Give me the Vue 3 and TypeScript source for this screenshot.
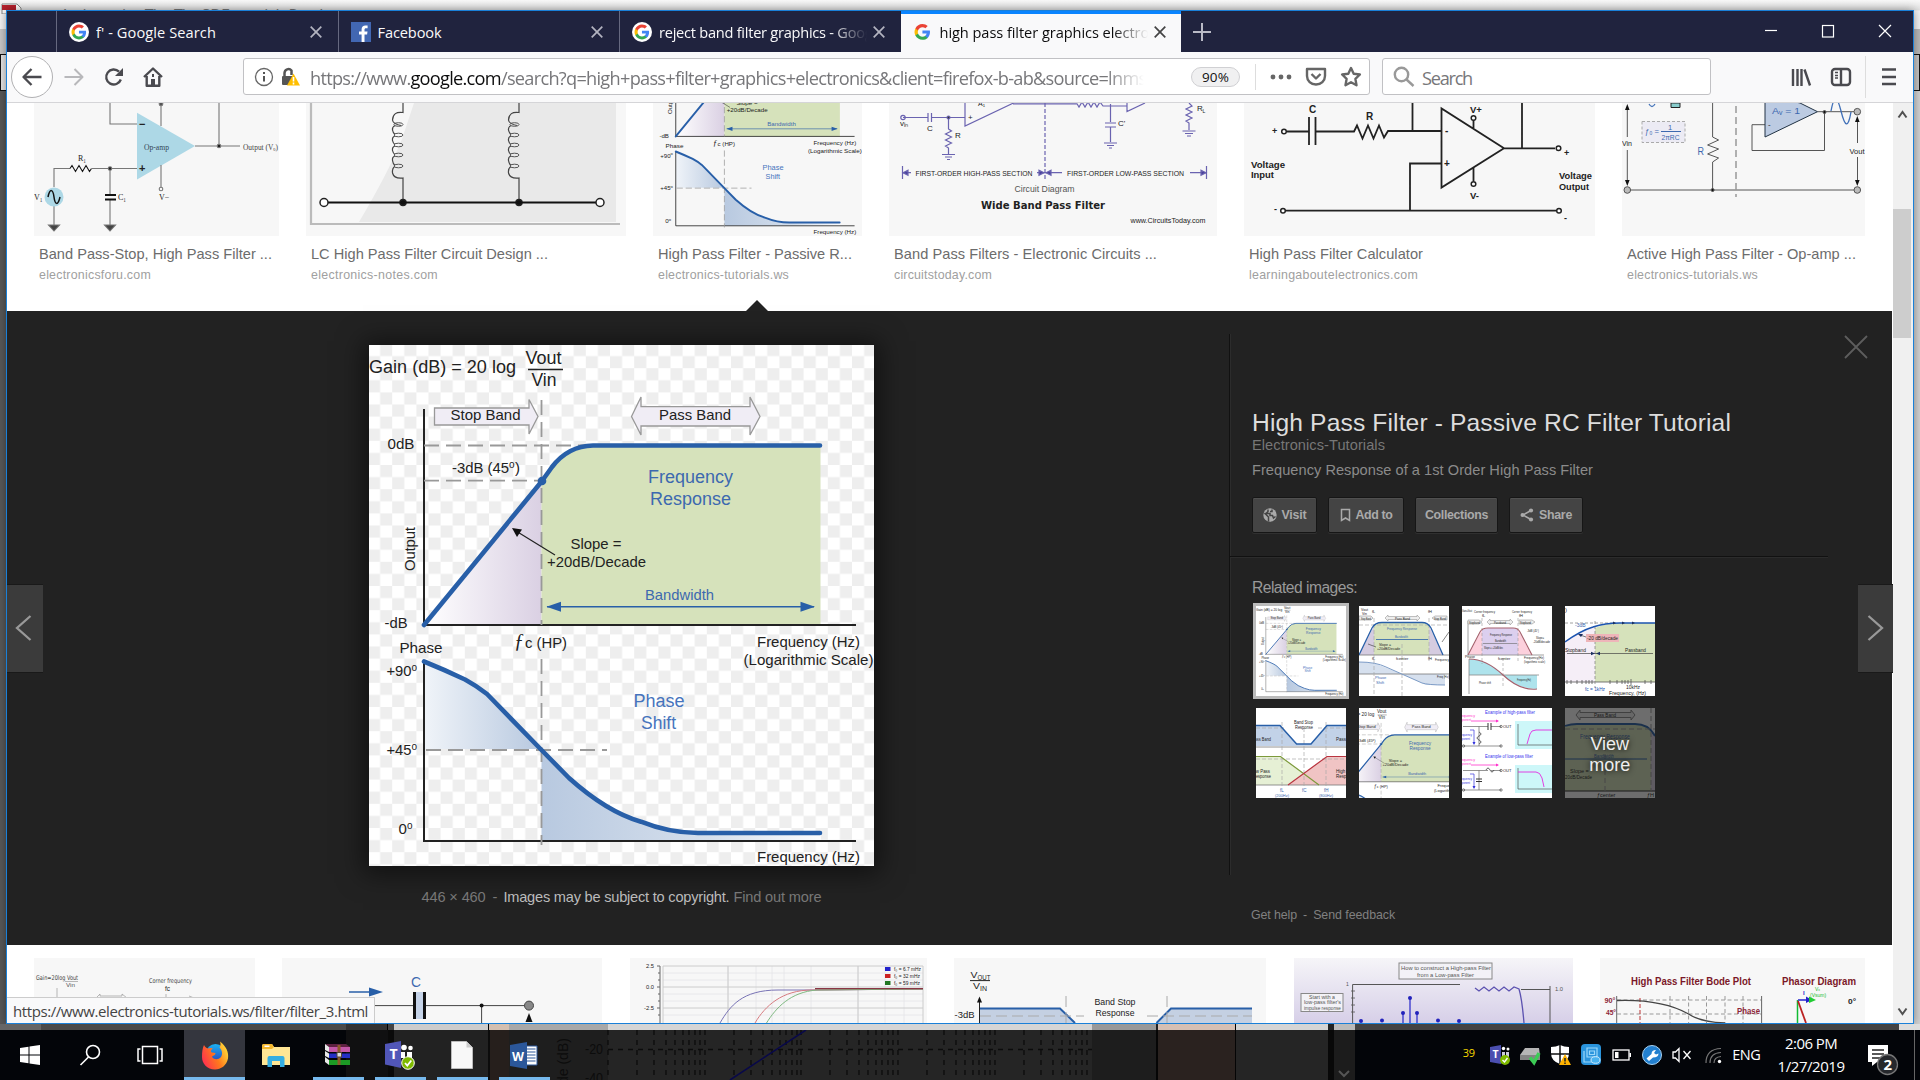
<script setup lang="ts">
import { h } from 'vue'
import type { FunctionalComponent, ObjectDirective } from 'vue'

/* Spreads a label's letters so that it takes the given width in pixels. */
const vFit: ObjectDirective<HTMLElement, number> = {
  mounted(el, { value }) {
    const count = (el.textContent ?? '').length
    const width = el.getBoundingClientRect().width
    el.style.letterSpacing = `${(value - width) / count}px`
  },
}

interface LabelProps { x: number; y: number; s: number; l?: number; c?: string; b?: boolean; f?: string }

/* Text inside a drawing: position, size, run length, colour. */
const Tx: FunctionalComponent<LabelProps> = (p, { slots }) =>
  h('text', {
    x: p.x, y: p.y, 'font-size': p.s, fill: p.c ?? '#222', stroke: 'none',
    'font-weight': p.b ? 700 : 400, 'font-family': p.f ?? 'Liberation Sans, Arial, sans-serif',
    textLength: p.l, lengthAdjust: p.l ? 'spacingAndGlyphs' : undefined,
  }, slots.default?.())
Tx.props = { x: Number, y: Number, s: Number, l: Number, c: String, b: Boolean, f: String } as any

const topRow = [
  { kind: 'opamp', w: 245, title: 'Band Pass-Stop, High Pass Filter ...', tw: 233, site: 'electronicsforu.com', sw: 112 },
  { kind: 'lc', w: 320, title: 'LC High Pass Filter Circuit Design ...', tw: 237, site: 'electronics-notes.com', sw: 127 },
  { kind: 'rc', w: 209, title: 'High Pass Filter - Passive R...', tw: 194, site: 'electronics-tutorials.ws', sw: 131 },
  { kind: 'wide', w: 328, title: 'Band Pass Filters - Electronic Circuits ...', tw: 263, site: 'circuitstoday.com', sw: 98 },
  { kind: 'calc', w: 351, title: 'High Pass Filter Calculator', tw: 174, site: 'learningaboutelectronics.com', sw: 169 },
  { kind: 'active', w: 243, title: 'Active High Pass Filter - Op-amp ...', tw: 229, site: 'electronics-tutorials.ws', sw: 131 },
]
const bottomRow = [
  { kind: 'gain', w: 221 }, { kind: 'cap', w: 320 }, { kind: 'curves', w: 297 },
  { kind: 'stop', w: 312 }, { kind: 'construct', w: 279 }, { kind: 'bode', w: 265 },
]
const related = ['rc', 'bandpass', 'pink', 'decade', 'bandstop', 'zoomed', 'examples', 'more']

const decades = [262, 359, 455, 552, 649]
const gridLines = decades.flatMap((d) => [0, 29, 46, 58, 67, 75, 81, 87, 92].map((o) => d + o))
</script>

<template>
  <div class="desktop">
    <!-- shared drawings -->
    <svg class="defs" width="0" height="0">
      <defs>
        <pattern id="checker" width="24.2" height="24.2" patternUnits="userSpaceOnUse" x="-1" y="-1">
          <rect width="24.2" height="24.2" fill="#fff" />
          <rect x="12.1" width="12.1" height="12.1" fill="#eee" />
          <rect y="12.1" width="12.1" height="12.1" fill="#eee" />
        </pattern>
        <linearGradient id="lilac"><stop offset="0" stop-color="#fff" /><stop offset="1" stop-color="#dad0e3" /></linearGradient>
        <linearGradient id="blueL"><stop offset="0" stop-color="#f0f4f9" /><stop offset="1" stop-color="#b7c8df" /></linearGradient>
        <linearGradient id="blueR"><stop offset="0" stop-color="#b8c9e0" /><stop offset=".6" stop-color="#d5dfec" /><stop offset="1" stop-color="#fbfcfe" /></linearGradient>
        <linearGradient id="violet" x2="0" y2="1"><stop offset="0" stop-color="#f6f5f8" /><stop offset="1" stop-color="#d6cfe8" /></linearGradient>
        <linearGradient id="fox" y1=".7" y2=".2"><stop offset="0" stop-color="#ff3050" /><stop offset=".5" stop-color="#ff7a1c" /><stop offset="1" stop-color="#ffe53b" /></linearGradient>
        <linearGradient id="globe" x2="0" y2="1"><stop offset="0" stop-color="#19b3f5" /><stop offset="1" stop-color="#2f3fb8" /></linearGradient>
        <g id="gee">
          <path fill="#4285F4" d="M17.6 9.2c0-.6-.1-1.2-.2-1.8H9v3.5h4.8c-.2 1.1-.8 2-1.8 2.7v2.2h2.9c1.7-1.6 2.7-3.9 2.7-6.6z" />
          <path fill="#34A853" d="M9 18c2.4 0 4.5-.8 6-2.2l-3-2.2c-.8.5-1.8.9-3 .9-2.3 0-4.3-1.6-5-3.7H1v2.3C2.500 16 5.500 18 9 18z" />
          <path fill="#FBBC05" d="M4 10.700c-.4-1.1-.4-2.300 0-3.400V5H1C-.3 7.500-.3 10.500 1 13z" />
          <path fill="#EA4335" d="M9 3.600c1.300 0 2.500.5 3.400 1.300L15 2.300C13.500.9 11.400 0 9 0 5.500 0 2.500 2 1 5l3 2.300c.7-2.100 2.700-3.700 5-3.700z" />
        </g>
        <g id="rcplot">
          <path d="M55 280L172.500 136V280z" fill="url(#lilac)" />
          <path d="M172.500 280V136L187 116Q204 101 222 101H451.500V280z" fill="#d6e2bb" />
          <path d="M55 316Q76 325 96 335 108 341 118 349L172.500 404H55z" fill="url(#blueL)" />
          <path d="M172.500 405L211 443Q240 466 272 477 300 488 329 488H452V496H172.500z" fill="url(#blueR)" />
          <g fill="none" stroke="#222" stroke-width="2"><path d="M55 64V280H487M55 316V496H487" /></g>
          <g fill="none" stroke="#999" stroke-width="1.800" stroke-dasharray="15 7"><path d="M172.500 55V280M55 100.500H220M55 135.700H172M172.500 314V500M57 405H238" /></g>
          <g fill="#f0edf5" stroke="#999" stroke-width="1.300">
            <path d="M65.500 63H160V54.500L169 71.500 160 89V80H65.500z" />
            <path d="M262.500 71.500L272 52V61.700H381V52L391 71.500 381 90V81H272V90z" />
          </g>
          <g fill="none" stroke="#285fa8" stroke-width="4.600" stroke-linecap="round" stroke-linejoin="round">
            <path d="M55 280L173 136 183 122Q199 101 224 100.500H451" />
            <path d="M55 316.500Q76 325 96 334.500 108 341 118 349L172.500 405 200 433Q238 467 272 476.700 300 488 329 488H451" />
          </g>
          <circle cx="173" cy="136" r="4.300" fill="#285fa8" />
          <path d="M178 261.700H445" stroke="#285fa8" stroke-width="1.500" /><path d="M177.500 261.700l14.500-5v10zM446 261.700l-14.500-5v10z" fill="#285fa8" />
          <path d="M186 210L147 186" stroke="#222" stroke-width="1.200" /><path d="M143 183l10 1.500-5 7.500z" fill="#111" />
          <Tx :x="0" :y="28" :s="18" :l="147">Gain (dB) = 20 log</Tx>
          <Tx :x="156.500" :y="19" :s="18" :l="36">Vout</Tx><path d="M159 24.500H194" stroke="#222" stroke-width="1.300" /><Tx :x="162.500" :y="40.500" :s="18" :l="25">Vin</Tx>
          <Tx :x="81.500" :y="75" :s="15" :l="70">Stop Band</Tx><Tx :x="290" :y="75" :s="15" :l="72">Pass Band</Tx>
          <Tx :x="18.500" :y="103.700" :s="15" :l="27">0dB</Tx>
          <Tx :x="83" :y="128" :s="15" :l="57">-3dB (45</Tx><Tx :x="140" :y="123" :s="10">o</Tx><Tx :x="146" :y="128" :s="15">)</Tx>
          <text transform="translate(46 226) rotate(-90)" font-size="15" textLength="44" fill="#222" font-family="Liberation Sans, Arial, sans-serif">Output</text>
          <Tx :x="279" :y="138" :s="18" :l="85" c="#3d69af">Frequency</Tx><Tx :x="281" :y="160" :s="18" :l="81" c="#3d69af">Response</Tx>
          <Tx :x="201.500" :y="203.500" :s="15" :l="51">Slope =</Tx><Tx :x="178" :y="221.500" :s="15" :l="99">+20dB/Decade</Tx>
          <Tx :x="276" :y="254.500" :s="15" :l="69" c="#3d69af">Bandwidth</Tx>
          <Tx :x="15.500" :y="283" :s="15" :l="23">-dB</Tx><Tx :x="30.500" :y="307.500" :s="15" :l="43">Phase</Tx>
          <text x="145" y="303" font-size="20" font-style="italic" font-family="Liberation Serif, serif" fill="#222">ƒ</text>
          <Tx :x="156" :y="303" :s="15" :l="42">c (HP)</Tx>
          <Tx :x="388" :y="301.500" :s="15" :l="103">Frequency (Hz)</Tx><Tx :x="374.500" :y="319.500" :s="15" :l="130">(Logarithmic Scale)</Tx>
          <Tx :x="17.500" :y="331" :s="15" :l="25">+90</Tx><Tx :x="42.500" :y="326" :s="10">o</Tx>
          <Tx :x="17.500" :y="409.500" :s="15" :l="25">+45</Tx><Tx :x="42.500" :y="404.500" :s="10">o</Tx>
          <Tx :x="29.500" :y="488.500" :s="15">0</Tx><Tx :x="38" :y="483.500" :s="10">o</Tx>
          <Tx :x="264.500" :y="362" :s="18" :l="51" c="#4674bd">Phase</Tx><Tx :x="272" :y="383.500" :s="18" :l="35" c="#4674bd">Shift</Tx>
          <Tx :x="388" :y="516.500" :s="15" :l="103">Frequency (Hz)</Tx>
        </g>
      </defs>
    </svg>

    <!-- application behind the browser -->
    <div class="behind">
      <div class="behind-title">
        <svg width="24" height="14"><path d="M2 4h15l4 4v6H2z" fill="#fff" stroke="#888" /><path d="M2 5h14v5H2z" fill="#b5202c" /></svg>
        <span v-fit="276">Assistant in - The-The 3DF tutorials Reader</span>
      </div>
      <div class="behind-bar"></div><div class="behind-box"></div><div class="behind-body"></div>
    </div>

    <main class="window">
      <header class="tabs">
        <div class="lead"></div>
        <div class="tab">
          <svg width="20" height="20"><circle cx="10" cy="10" r="10" fill="#fff" /><use href="#gee" transform="translate(2.500 2.500) scale(.83)" /></svg>
          <span class="label"><span v-fit="120">f' - Google Search</span></span>
          <svg class="x" width="12" height="12"><path d="M.7.7l10.600 10.600M11.300.7L.7 11.300" /></svg>
        </div>
        <div class="tab">
          <svg width="20" height="20"><rect width="20" height="20" fill="#4267b2" /><path d="M13.500 20v-7.500h2.600l.4-3h-3V7.700c0-.9.300-1.500 1.600-1.500h1.500V3.500c-.4 0-1.200-.1-2.200-.1-2.300 0-3.800 1.400-3.800 3.900v2.200H8v3h2.600V20z" fill="#fff" /></svg>
          <span class="label"><span v-fit="64">Facebook</span></span>
          <svg class="x" width="12" height="12"><path d="M.7.7l10.600 10.600M11.300.7L.7 11.300" /></svg>
        </div>
        <div class="tab">
          <svg width="20" height="20"><circle cx="10" cy="10" r="10" fill="#fff" /><use href="#gee" transform="translate(2.500 2.500) scale(.83)" /></svg>
          <span class="label fade"><span v-fit="273">reject band filter graphics - Google Search</span></span>
          <svg class="x" width="12" height="12"><path d="M.7.7l10.600 10.600M11.300.7L.7 11.300" /></svg>
        </div>
        <div class="tab active">
          <svg width="20" height="20"><use href="#gee" transform="translate(1.500 2) scale(.88)" /></svg>
          <span class="label fade"><span v-fit="236">high pass filter graphics electronics</span></span>
          <svg class="x" width="12" height="12"><path d="M.7.7l10.600 10.600M11.300.7L.7 11.300" /></svg>
        </div>
        <svg class="plus" width="18" height="18"><path d="M9 0v18M0 9h18" /></svg>
        <div class="controls">
          <svg width="14" height="14"><path d="M1 6.500h12" /></svg>
          <svg width="14" height="14"><rect x="1.500" y="1.500" width="11" height="11.500" /></svg>
          <svg width="14" height="14"><path d="M1 1l12 12M13 1L1 13" /></svg>
        </div>
      </header>

      <nav class="toolbar">
        <span class="back"><svg width="22" height="20"><path d="M20.500 10H3M10.500 2L2.500 10l8 8" /></svg></span>
        <svg class="fwd" width="22" height="20"><path d="M1.500 10H19M11.500 2l8 8-8 8" /></svg>
        <svg class="reload" width="20" height="20"><path d="M16.800 12.500A7.500 7.500 0 1 1 15 4.700" /><path d="M19 1v8h-8z" class="solid" /></svg>
        <svg class="home" width="22" height="22"><path d="M2 11L11 2.500 20 11M4.700 10v9.800h12.600V10" /><path d="M9 13h4v7H9zM10 8h2v3h-2z" class="solid" /></svg>
        <div class="url">
          <svg width="20" height="20"><circle cx="10" cy="10" r="8.500" fill="none" stroke="#666" stroke-width="1.300" /><path d="M10 9v5.500M10 5v2" stroke="#555" stroke-width="2" /></svg>
          <svg class="lock" width="20" height="20"><path d="M3.500 9V6a4 4 0 0 1 7-2.500V8" fill="none" stroke="#555" stroke-width="2.500" /><rect x="1" y="9" width="11" height="9" rx="1" fill="#555" /><path d="M12.500 6.500L19 18.500H6z" fill="#ffbf00" stroke="#f6a200" stroke-linejoin="round" /><path d="M12.500 10v4.500M12.500 15.500v2" stroke="#fff" stroke-width="1.600" /></svg>
          <span class="address"><span v-fit="849">https://www.<b>google.com</b>/search?q=high+pass+filter+graphics+electronics&amp;client=firefox-b-ab&amp;source=lnms&amp;</span></span>
          <span class="zoom"><span v-fit="27">90%</span></span>
          <i class="sep"></i>
          <svg class="dots" width="22" height="20"><circle cx="3" cy="10" r="2.400" /><circle cx="11" cy="10" r="2.400" /><circle cx="19" cy="10" r="2.400" /></svg>
          <svg class="pocket" width="22" height="20"><path d="M2 2h18v7a9 8.500 0 0 1-18 0z" /><path d="M6.500 7l4.500 4.500L15.500 7" /></svg>
          <svg class="star" width="22" height="22"><path d="M11 2l2.700 5.700 6.200.8-4.500 4.400 1.100 6.300L11 16.200l-5.500 3 1.100-6.300L2.100 8.500l6.200-.8z" /></svg>
        </div>
        <div class="search">
          <svg width="22" height="22"><circle cx="8.500" cy="8.500" r="6.700" /><path d="M13 13l7.500 7" /></svg><span class="hint"><span v-fit="50">Search</span></span>
        </div>
        <svg class="lib" width="22" height="20"><path d="M2 2v17M6.500 2v17M10.500 2v17M13.500 2.500L19 18.500" /></svg>
        <svg class="side-ic" width="22" height="20"><rect x="2" y="2" width="18" height="16" rx="3" /><path d="M11 2v16" /><path d="M5 5.500h3M5 8.500h3M5 11h3" stroke-width="1.300" /></svg>
        <i class="sep tall"></i>
        <svg class="menu" width="16" height="20"><path d="M1 2.500h14M1 10h14M1 17h14" /></svg>
      </nav>

      <div class="viewport">
        <div class="page">
          <section class="results">
            <article v-for="r in topRow" :key="r.kind">
              <svg :width="r.w" height="133" :viewBox="`0 0 ${r.w} 133`" fill="none">
                <rect width="100%" height="133" fill="#f7f7f7" />
                <g v-if="r.kind === 'opamp'" stroke="#777" stroke-width="1.100">
                  <path d="M103 9.700V76.500L161 43z" fill="#add8e6" stroke="none" />
                  <path d="M76 0V21H103M127 0V23M161 43H206M185 0V43M20 84V65.500H36M58 65.500H103M76 65V91M76 97V123M127 62V84M20 103V122" />
                  <path d="M36 65.500l2-3 3.500 6 3.500-6 3.500 6 3.500-6 3.500 6 2-3" stroke="#111" />
                  <path d="M71 92H82M71 96.500H82" stroke="#111" stroke-width="2" /><circle cx="20" cy="94" r="9.500" fill="#add8e6" stroke="none" />
                  <path d="M14 94c2-9 5-8 6 0s4 9 6 0" stroke="#111" stroke-width="1.500" /><path d="M14.500 122h11l-5.500 6zM70.500 122h11l-5.500 6z" fill="#444" />
                  <circle cx="127" cy="86" r="1.800" /><circle cx="127" cy="1" r="1.800" fill="#555" /><circle cx="185" cy="43" r="1.800" fill="#222" /><circle cx="76" cy="65.500" r="1.800" fill="#222" />
                  <Tx :x="110" :y="46.500" :s="8" :l="25" c="#345" f="Liberation Serif">Op-amp</Tx><Tx :x="209" :y="46.500" :s="8" :l="35" c="#444" f="Liberation Serif">Output (Vₒ)</Tx>
                  <Tx :x="105" :y="24.500" :s="11" b>−</Tx><Tx :x="105" :y="69" :s="11" b>+</Tx><Tx :x="44" :y="58" :s="8" f="Liberation Serif">R₁</Tx><Tx :x="84" :y="97" :s="8" f="Liberation Serif">C₁</Tx>
                  <Tx :x="0" :y="97" :s="8" f="Liberation Serif">V₁</Tx><Tx :x="125" :y="97" :s="8" f="Liberation Serif">V−</Tx>
                </g>
                <g v-else-if="r.kind === 'lc'" stroke="#222" stroke-width="1.500">
                  <path d="M108 0H310V119H53Q82 70 96 36z" fill="#e9e9e9" stroke="none" /><path d="M5 0V121H314" stroke="#bbb" stroke-width="2.200" />
                  <g v-for="x in [97, 213]" :key="x" :transform="`translate(${x} 0)`">
                    <path d="M0 0V9.500Q-10 8-10.500 17-10 21-2 22.500M-8 22.500Q-11 24-10.500 27-10 30-8 31.500M-8 33Q-11 34-10.500 37.500-10 40-8 41.500M-8 43Q-11 44-10.500 47.500-10 50-8 51.500M-8 53Q-11 54-10.500 57.500-10 61-8 62.500M-8 63.500Q-11 65-10.500 70-9 76 0 75V99" stroke="#444" stroke-width="1.200" />
                    <ellipse v-for="y in [21.500, 32, 42, 52, 63]" :key="y" cx="-4.500" :cy="y" rx="4.500" ry="1.800" stroke="#555" stroke-width="1" /><circle cy="99.500" r="3" fill="#111" />
                  </g>
                  <path d="M22 99.500H290" stroke="#111" stroke-width="2" /><circle cx="18" cy="99.500" r="4" fill="#fff" /><circle cx="294" cy="99.500" r="4" fill="#fff" />
                </g>
                <use v-else-if="r.kind === 'rc'" href="#rcplot" transform="translate(0 -82.500) scale(.4139)" />
                <g v-else-if="r.kind === 'wide'" stroke="#6a63b0" stroke-width="1.200">
                  <path d="M14 14.500H39M39 10v9M42.500 10v9M42.500 14.500H76M76 0V23L124.500 0M59.500 14.500V26l3 2-6 3 6 3-6 3 6 3-6 3 3 2V51M53 51.500H66M56 54H63M58 56.500H61M124 .8H188L190 4l3-5 3 5 3-5 3 5 3-5 3 5 3-5 3 4H238M221.500 1V19M216 20H227M216 24H227M221.500 24V39M215 40H228M218 42.500H225M220 45H223M238 0V8.500L256 0M300 0l3 3-6 3 6 3-6 3 6 3-6 3 3 2V27M293.500 28H306.500M296 30.500H304M298 33H302" />
                  <path d="M156 0V76" stroke-dasharray="4 2" /><path d="M13.500 63V76M317.500 63V76M14 69.700H22M148 69.700H173M301 69.700H317" />
                  <path d="M14 69.700l5-2.500v5zM155 69.700l-5-2.500v5zM157 69.700l5-2.500v5zM317 69.700l-5-2.500v5z" fill="#4a429c" /><circle cx="14" cy="14.500" r="2.200" /><circle cx="59.500" cy="14.500" r="1.500" fill="#333" />
                  <Tx :x="26.500" :y="72.500" :s="8" :l="117">FIRST-ORDER HIGH-PASS SECTION</Tx><Tx :x="178" :y="73" :s="8" :l="117">FIRST-ORDER LOW-PASS SECTION</Tx>
                  <Tx :x="125.500" :y="88.500" :s="8.500" :l="60" c="#555">Circuit Diagram</Tx><Tx :x="92" :y="106" :s="10" :l="124" b f="DejaVu Sans">Wide Band Pass Filter</Tx><Tx :x="241.500" :y="119.500" :s="7.500" :l="75">www.CircuitsToday.com</Tx>
                  <Tx :x="38" :y="28" :s="8">C</Tx><Tx :x="66" :y="35" :s="8">R</Tx><Tx :x="11" :y="23" :s="8">vᵢₙ</Tx><Tx :x="79" :y="17" :s="8">+</Tx><Tx :x="89" :y="3" :s="7">A₁</Tx><Tx :x="229" :y="23" :s="8">C'</Tx><Tx :x="308" :y="8" :s="8">R</Tx><Tx :x="313.500" :y="10" :s="5">L</Tx>
                </g>
                <g v-else-if="r.kind === 'calc'" stroke="#222" stroke-width="1.800">
                  <path d="M43 28.500H65M65 14V42M71.500 14V42M71.500 28.500H110l3-6 5.500 13 5.500-13 5.500 13 5.500-13 5 12 4-6.500H197M168.500 0V28M278 0V45M197.500 5.500V84.500L260 45.300zM260 45.300H311M197 60.500H166V107.500M41 107.700H312M229.500 17V25M229.500 65V78" />
                  <g fill="#fff" stroke-width="1.500"><circle cx="40" cy="28.500" r="2.300" /><circle cx="39" cy="107.700" r="2.300" /><circle cx="314.500" cy="45.300" r="2.300" /><circle cx="315" cy="107.700" r="2.300" /><circle cx="229.500" cy="15" r="2.300" /><circle cx="229.500" cy="81" r="2.300" /></g>
                  <Tx :x="65" :y="10" :s="10" b>C</Tx><Tx :x="122" :y="17" :s="10" b>R</Tx><Tx :x="226" :y="9.500" :s="9.500" b>V+</Tx><Tx :x="226" :y="96" :s="9.500" b>V-</Tx><Tx :x="201" :y="31" :s="10" b>-</Tx><Tx :x="200" :y="64" :s="10" b>+</Tx>
                  <Tx :x="28" :y="31" :s="9" b>+</Tx><Tx :x="30" :y="109" :s="9" b>-</Tx><Tx :x="320" :y="53" :s="9" b>+</Tx><Tx :x="320" :y="118" :s="9" b>-</Tx>
                  <Tx :x="7" :y="64.500" :s="9" :l="34" b>Voltage</Tx><Tx :x="7" :y="75" :s="9" :l="23" b>Input</Tx><Tx :x="315" :y="76" :s="9" :l="33" b>Voltage</Tx><Tx :x="315" :y="86.500" :s="9" :l="30" b>Output</Tx>
                </g>
                <g v-else stroke="#555" stroke-width="1">
                  <path d="M5.300 4V34M5.300 47V79M90.600 0V34l6 3-11 5 11 4-11 5 11 4-6 4V87M5 87H235M195.500 8.700H232M202.500 9V47.500H130V21.700H143M235.500 16V40M235.500 54V80" />
                  <path d="M114 3V94" stroke="#999" stroke-dasharray="7 4" stroke-width="1.500" /><path d="M143 -8V34L195.500 8.700 178 0z" fill="#bccbe2" stroke="#234" />
                  <path d="M3 7l2.300-6 2.300 6zM3 77l2.300 6 2.300-6zM233 19l2.300-6 2.300 6zM233 77l2.300 6 2.300-6z" fill="#111" stroke="none" /><rect x="20" y="18.500" width="43" height="21" fill="#ecebf4" stroke="#aaa" stroke-dasharray="3 2" />
                  <path d="M209 8C212-8 215-8 219 8S226 26 229 9M27 1q3 5 6 0" stroke="#4070b8" stroke-width="1.300" /><path d="M49 0h9v4.500h-9z" fill="#8cc" stroke="#222" /><circle cx="90.600" cy="87" r="1.500" fill="#111" /><circle cx="202.500" cy="9" r="1.500" fill="#111" />
                  <g fill="#bbb"><circle cx="5.300" cy="87" r="3.300" /><circle cx="235.300" cy="87" r="3.300" /><circle cx="235.300" cy="8.700" r="3.300" /></g>
                  <Tx :x="0" :y="43" :s="7.500" :l="10">Vin</Tx><Tx :x="227.500" :y="51" :s="7.500" :l="15">Vout</Tx><Tx :x="75.500" :y="51.500" :s="10" :l="6.500" c="#3d69af">R</Tx><Tx :x="150" :y="11" :s="9.500" :l="28" c="#3d69af">Aᵥ = 1</Tx><Tx :x="146" :y="24" :s="8">-</Tx>
                  <Tx :x="23" :y="31" :s="8" :l="14" c="#3d69af">ƒ₀ =</Tx><Tx :x="46" :y="26.500" :s="7.500" c="#3d69af">1</Tx><Tx :x="39.500" :y="37" :s="7.500" :l="18" c="#3d69af">2πRC</Tx><path d="M39 28.500H59" stroke="#3d69af" />
                </g>
              </svg>
              <h3><span v-fit="r.tw">{{ r.title }}</span></h3>
              <p><span v-fit="r.sw">{{ r.site }}</span></p>
            </article>
          </section>

          <section class="panel">
            <i class="caret"></i>
            <button class="arrow prev"><svg width="18" height="28"><path d="M15.500 2L2 14l13.500 12" /></svg></button>
            <figure>
              <svg class="hero" width="505" height="521"><rect width="505" height="521" fill="url(#checker)" /><use href="#rcplot" /></svg>
              <figcaption><span v-fit="64">446 × 460</span><span>-</span><b v-fit="226">Images may be subject to copyright.</b><span v-fit="88">Find out more</span></figcaption>
            </figure>
            <aside>
              <div class="info">
                <h1><span v-fit="479">High Pass Filter - Passive RC Filter Tutorial</span></h1>
                <p class="src"><span v-fit="133">Electronics-Tutorials</span></p>
                <p class="desc"><span v-fit="341">Frequency Response of a 1st Order High Pass Filter</span></p>
                <div class="actions">
                  <button class="visit"><svg width="14" height="14"><circle cx="7" cy="7" r="6.700" fill="#aaa" /><path d="M1.500 5l4 4v4.500M5 1.500v2l-2 2h4v2h2.500l1 2.500 2-1.500M9 1.500v2H7" fill="none" stroke="#444" stroke-width="1.500" /></svg><span v-fit="25">Visit</span></button>
                  <button class="add"><svg width="11" height="14"><path d="M1.500 1.500h8v11L5.500 10l-4 2.500z" fill="none" stroke="#aaa" stroke-width="1.500" /></svg><span v-fit="37">Add to</span></button>
                  <button class="coll"><span v-fit="63">Collections</span></button>
                  <button class="share"><svg width="14" height="14"><path d="M11 2.500L3 7l8 4.500" fill="none" stroke="#aaa" stroke-width="1.500" /><circle cx="11" cy="2.500" r="2.100" fill="#aaa" /><circle cx="2.600" cy="7" r="2.100" fill="#aaa" /><circle cx="11" cy="11.500" r="2.100" fill="#aaa" /></svg><span v-fit="33">Share</span></button>
                </div>
              </div>
              <div class="related">
                <h2><span v-fit="105">Related images:</span></h2>
                <div class="grid">
                  <div v-for="k in related" :key="k" :class="['thumb', { selected: k === 'rc' }]">
                    <svg v-if="k === 'rc'" width="90" height="90" viewBox="0 0 505 521" preserveAspectRatio="none"><use href="#rcplot" /></svg>
                    <svg v-else-if="k === 'zoomed'" width="90" height="90" viewBox="88 -2 344 344"><use href="#rcplot" /></svg>
                    <svg v-else width="90" height="90" fill="none">
                      <g v-if="k === 'bandpass'">
                        <path d="M0 49L15 20V49zM70 20L84 49H70z" fill="#d5cce0" /><path d="M15 49V20L22 16H64L70 20V49z" fill="#d6e2bb" /><path d="M0 56Q15 56 25 61L43 68H0zM43 68L67 79H86V68z" fill="#d6e0ee" />
                        <path d="M0 49H90M0 68H90" stroke="#777" stroke-width=".8" /><path d="M15 12V90M43 38V90M70 12V55M0 19H90" stroke="#aaa" stroke-dasharray="4 2" stroke-width=".7" />
                        <path d="M0 49L13 22Q16 16.500 23 16.500H63Q69 16.500 72 22L84 49" stroke="#285fa8" stroke-width="1.300" /><path d="M0 56Q17 56 27 61L63 77Q69 79 86 79" stroke="#7c9bc6" stroke-width="1" />
                        <path d="M26 12l3-3v1.500H58V9l3 3-3 3v-1.500H29V15zM0 10H12l2 2-2 2H0zM73 12l3-2H88v4H76z" fill="#eee" stroke="#999" stroke-width=".6" /><path d="M17 33.500H69" stroke="#285fa8" stroke-width=".8" /><path d="M9 38l8 3M90 26l-7 10" stroke="#333" stroke-width=".6" />
                        <Tx :x="36" :y="13.500" :s="3.500" :l="15">Pass Band</Tx><Tx :x="2" :y="13.500" :s="3.500" :l="10">Stop Band</Tx><Tx :x="75" :y="13.500" :s="3.500" :l="12">Stop Band</Tx><Tx :x="28" :y="24" :s="3.800" :l="30" c="#3d69af">Frequency Response</Tx><Tx :x="36" :y="32" :s="3.500" :l="13" c="#3d69af">Bandwidth</Tx>
                        <Tx :x="20" :y="40" :s="3.500">Slope =</Tx><Tx :x="18" :y="44" :s="3.500">+20dB/Decade</Tx><Tx :x="2" :y="5" :s="3.500">Vout</Tx><Tx :x="3" :y="9" :s="3.500">Vin</Tx><Tx :x="13" :y="7" :s="4">fL</Tx><Tx :x="69" :y="7" :s="4">fH</Tx><Tx :x="13" :y="54" :s="4">fL</Tx><Tx :x="37" :y="54" :s="4">fcenter</Tx><Tx :x="69" :y="54" :s="4">fH</Tx><Tx :x="16" :y="73" :s="4" c="#3d69af">Phase</Tx><Tx :x="17" :y="77.500" :s="4" c="#3d69af">Shift</Tx><Tx :x="76" :y="55" :s="3" :l="14">Frequency</Tx><Tx :x="78" :y="71.500" :s="3" :l="12">Freq (Hz)</Tx>
                      </g>
                      <g v-else-if="k === 'pink'">
                        <path d="M6 49L20 24V49zM56 24L70 49H56z" fill="#fcd0dc" /><path d="M20 49V24L26 22H51L56 24V49z" fill="#dccfee" /><path d="M7 53Q24 53 41 69H7zM41 69Q56 83 75 83V69z" fill="#aee3ec" />
                        <path d="M6 15V49H82M7 53V88M7 69H77" stroke="#888" stroke-width=".8" /><path d="M20 12V58M56 12V55M41 52V80" stroke="#999" stroke-dasharray="3 2" stroke-width=".6" />
                        <path d="M6 49L18 26Q20 22 26 22H51Q56 22 58 26L70 49M7 53Q24 53 41 69T75 83" stroke="#a5606c" stroke-width="1.100" />
                        <path d="M25 16l3-3v1.500H48V13l3 3-3 3v-1.500H28V19zM6 14H17l3 2-3 2H6zM57 14H70l3 2-3 2H57z" fill="#eee" stroke="#999" stroke-width=".6" />
                        <Tx :x="12" :y="6.500" :s="3.500" :l="21">Corner frequency</Tx><Tx :x="50" :y="6.500" :s="3.500" :l="20">Corner frequency</Tx><Tx :x="20" :y="11" :s="4">fL</Tx><Tx :x="57" :y="11" :s="4">fH</Tx><Tx :x="32" :y="17.500" :s="3.500" :l="12">Passband</Tx><Tx :x="7" :y="17.500" :s="3.500" :l="11">Stopband</Tx><Tx :x="58" :y="17.500" :s="3.500" :l="11">Stopband</Tx>
                        <Tx :x="28" :y="30" :s="3.500" :l="22">Frequency Response</Tx><Tx :x="33" :y="36" :s="3.200" :l="11">Bandwidth</Tx><path d="M21 37.500H55" stroke="#666" stroke-width=".6" /><Tx :x="22" :y="43" :s="3" :l="19">Slope = +20dB/dec</Tx><Tx :x="65" :y="26" :s="3" :l="12">-3dB (45°)</Tx><Tx :x="74" :y="33" :s="3" :l="8">Slope=</Tx><Tx :x="71" :y="37" :s="3" :l="17">-20dB/decade</Tx>
                        <Tx :x="0" :y="6" :s="3" :l="10">Gain=Vout</Tx><Tx :x="3" :y="52" :s="3.500">Phase</Tx><Tx :x="62" :y="53" :s="3.500" :l="20">Frequency(Hz)</Tx><Tx :x="62" :y="57" :s="3.500" :l="21">(logarithmic scale)</Tx><Tx :x="17" :y="78" :s="3.200" :l="12">Phase shift</Tx><Tx :x="55" :y="75" :s="3" :l="14">Frequency(Hz)</Tx><Tx :x="36" :y="54" :s="4">fcenter</Tx>
                      </g>
                      <g v-else-if="k === 'decade'">
                        <path d="M30 76V22Q42 17 55 17H90V76z" fill="#d6e2bb" /><path d="M0 76V36Q15 25 30 21V76z" fill="#f5eef7" /><path d="M0 76H90M2 74v4M6 74v4M12 74v4M17 74v4M21 74v4M24 74v4M27 74v4M45 74v4M52 74v4M57 74v4M60 74v4M63 74v4M66 73v6M80 74v4M86 74v4" stroke="#555" stroke-width=".8" />
                        <path d="M30 15V82M0 17H50" stroke="#888" stroke-dasharray="3 2" stroke-width=".8" /><path d="M0 36Q15 25 28 21 40 17 55 17H90" stroke="#1c54b0" stroke-width="1.500" /><rect x="21" y="28" width="33" height="8" fill="#eeb5b9" />
                        <path d="M2 47.500H88M21 31l-6-2" stroke="#444" stroke-width=".7" /><path d="M30 47.500l-4-1.700v3.400zM31 47.500l4-1.700v3.400zM13 28l5 0-2 3zM48 15.500v3l3-1.500zM57 15.500v3l3-1.500zM67 15.500v3l3-1.500z" fill="#1c3060" />
                        <Tx :x="22" :y="34" :s="5.500" :l="31">-20 dB/decade</Tx><Tx :x="0" :y="46" :s="5" :l="21">Stopband</Tx><Tx :x="60" :y="46" :s="5" :l="21">Passband</Tx><Tx :x="10" :y="21" :s="5" c="#3d69af">-3dB</Tx><Tx :x="20" :y="84.500" :s="5.500" :l="20" c="#1c54b0">fc = 1kHz</Tx><Tx :x="61" :y="82.500" :s="5" :l="14">10kHz</Tx><Tx :x="44" :y="88.500" :s="5" :l="37">Frequency, (Hz)</Tx><Tx :x="0" :y="5.500" :s="6">)</Tx>
                      </g>
                      <g v-else-if="k === 'bandstop'">
                        <path d="M0 38V17H24L41 36H55L71 17H90V38z" fill="#c2d2e8" /><path d="M0 77V48H24.500L63 77z" fill="#e6f0d5" /><path d="M32 77L71 48H90V77z" fill="#f0c4c4" />
                        <path d="M0 39H90M0 77H90" stroke="#777" stroke-width=".8" /><path d="M0 20H30M62 20H90M26 14V80M48 20V80M70 14V80M0 51H90" stroke="#aaa" stroke-dasharray="4 2" stroke-width=".7" />
                        <path d="M0 17.500H24L40.600 36H55L71 17.500H90" stroke="#285fa8" stroke-width="1.500" /><path d="M0 48.500H24.500L63 77" stroke="#7d9a3c" stroke-width="1.200" /><path d="M32 77L71 48.500H90" stroke="#b93540" stroke-width="1.200" />
                        <Tx :x="38" :y="16" :s="4.500" :l="19">Band Stop</Tx><Tx :x="39" :y="21" :s="4.500" :l="18">Response</Tx><Tx :x="-4" :y="33" :s="4.500" :l="19">Pass Band</Tx><Tx :x="80" :y="33" :s="4.500">Pass Band</Tx><Tx :x="-5" :y="65" :s="4.500" :l="19">Low Pass</Tx><Tx :x="-3" :y="70" :s="4.500" :l="18">Response</Tx><Tx :x="80" :y="65" :s="4.500">High Pass</Tx><Tx :x="80" :y="70" :s="4.500">Response</Tx>
                        <Tx :x="24" :y="84" :s="4.500" c="#3d69af">fL</Tx><Tx :x="46" :y="84" :s="4.500" c="#3d69af">fC</Tx><Tx :x="68" :y="84" :s="4.500" c="#3d69af">fH</Tx><Tx :x="19" :y="89" :s="4.200" :l="14" c="#3d69af">(200Hz)</Tx><Tx :x="63" :y="89" :s="4.200" :l="14" c="#3d69af">(800Hz)</Tx>
                      </g>
                      <g v-else-if="k === 'examples'">
                        <g v-for="y in [0, 44]" :key="y" :transform="`translate(0 ${y})`">
                          <rect x="53" y="13" width="37" height="28" fill="#cdf7f9" /><path d="M56 16V37H90" stroke="#555" stroke-width=".7" /><path d="M9 13H36" stroke="#f3c" stroke-width=".8" /><path d="M37 13l-3-1.500v3z" fill="#f3c" />
                          <path d="M1 18.500H26M29 18.500H39M1 38H39M17 18.500V38" stroke="#666" stroke-width=".7" /><circle cx="1.500" cy="38" r="1.200" stroke="#333" stroke-width=".6" /><circle cx="39" cy="38" r="1.200" stroke="#333" stroke-width=".6" /><circle cx="39" cy="18.500" r="1.200" stroke="#333" stroke-width=".6" />
                          <path d="M8 22H12V36" stroke="#33d" stroke-width=".7" /><path d="M12 37l-1.500-3h3z" fill="#33d" /><Tx :x="41" :y="20" :s="4">OUT</Tx><Tx :x="-3" :y="9" :s="3.800" c="#f3c" :l="16">frequency</Tx><Tx :x="-5" :y="13" :s="3.800" c="#f3c" :l="14">component</Tx><Tx :x="-3" :y="28" :s="3.300" :l="13" c="#33d">frequency</Tx><Tx :x="-5" :y="32" :s="3.300" :l="13" c="#33d">component</Tx>
                        </g>
                        <path d="M26 15v7M29 15v7M14 71H20M14 73.500H20" stroke="#333" /><path d="M17 24q4 2 0 4t0 4 0 4M24 62q2-4 4 0t4 0" stroke="#444" stroke-width=".8" /><path d="M65 36L68 26Q69 22 74 22H90M56 64H74Q78 64 80 70L82 79" stroke="#e32be0" stroke-width=".9" />
                        <Tx :x="23" :y="6" :s="4.500" :l="50" c="#33e">Example of high-pass filter</Tx><Tx :x="23" :y="49.500" :s="4.500" :l="48" c="#33e">Example of low-pass filter</Tx>
                      </g>
                      <g v-else>
                        <path d="M0 83V19Q5 16 12 16H70Q80 16 86 22V83z" fill="#d6e2bb" /><path d="M86 22L90 28V83H86z" fill="#dad0e3" /><path d="M0 83H90" stroke="#222" /><path d="M0 18Q6 16 12 16H70Q84 16 90 28" stroke="#285fa8" stroke-width="1.800" /><path d="M40 30V83M86 0V83M0 21H90" stroke="#999" stroke-dasharray="5 3" />
                        <path d="M11 7l4-5v2.500H66V2l4 5-4 5V9.500H15V12z" fill="#eee" stroke="#888" /><path d="M0 51H82" stroke="#285fa8" /><Tx :x="29" :y="9" :s="5.500" :l="22">Pass Band</Tx><Tx :x="15" :y="31" :s="6.500" :l="50" c="#3d69af">Frequency Response</Tx><Tx :x="29" :y="49.500" :s="5.500" :l="20" c="#3d69af">Bandwidth</Tx><Tx :x="5" :y="65" :s="5.500">Slope =</Tx><Tx :x="0" :y="70.500" :s="5.500" :l="27">20dB/Decade</Tx><Tx :x="32" :y="88.500" :s="5.500">ƒcenter</Tx><Tx :x="82" :y="88.500" :s="5.500">ƒH</Tx>
                      </g>
                    </svg>
                    <span v-if="k === 'more'" class="more">View<br>more</span>
                  </div>
                </div>
              </div>
              <div class="foot"><span v-fit="46">Get help</span><span>-</span><span v-fit="82">Send feedback</span></div>
            </aside>
            <button class="arrow next"><svg width="18" height="28"><path d="M2.500 2L16 14 2.500 26" /></svg></button>
            <svg class="close" width="24" height="24"><path d="M1 1l22 22M23 1L1 23" /></svg>
          </section>

          <section class="results lower">
            <svg v-for="b in bottomRow" :key="b.kind" :width="b.w" height="65" fill="none">
              <rect width="100%" height="65" :fill="b.kind === 'construct' ? 'url(#violet)' : '#f7f7f7'" />
              <g v-if="b.kind === 'gain'">
                <Tx :x="2" :y="22" :s="6.500" :l="42" c="#444" f="DejaVu Sans">Gain=20log Vout</Tx><Tx :x="32" :y="29" :s="6" :l="9" c="#555">Vin</Tx><Tx :x="115" :y="24.500" :s="6.500" :l="43" c="#444" f="DejaVu Sans">Corner frequency</Tx><Tx :x="131" :y="33" :s="6.500">fc</Tx>
                <path d="M31 23.500H44M23 30V65M62 40l4-4v2H88v-2l5 4M132 36V65M155 38l5 2" stroke="#999" stroke-width=".7" />
              </g>
              <g v-else-if="b.kind === 'cap'">
                <path d="M67 34H92" stroke="#285fa8" stroke-width="1.500" /><path d="M101 34l-14-4.500v9z" fill="#285fa8" /><rect x="131" y="34" width="13" height="27" fill="#c6d4e9" /><path d="M132.500 34V61M142.500 34V61" stroke="#111" stroke-width="3" />
                <path d="M60 47.600H131M144 47.600H243M199.600 48V65" stroke="#444" /><circle cx="199.600" cy="47.600" r="2" fill="#111" /><circle cx="247" cy="47.600" r="4.500" fill="#888" stroke="#444" /><path d="M247 55l3.500 9h-7z" fill="#111" /><Tx :x="129" :y="29" :s="15" :l="10" c="#3d69af">C</Tx>
              </g>
              <g v-else-if="b.kind === 'curves'">
                <path d="M33 15H293M33 22H293M33 36H293M33 43H293M33 57H293M98 8V65M126 8V65M142 8V65M154 8V65M181 8V65M228 8V65M255 8V65M274 8V65" stroke="#e4e4e8" stroke-width=".8" /><path d="M33 8H293V65M33 29H293M33 50H293M33 8V65M98 8V65M228 8V65" stroke="#ccc" /><path d="M30 8V65M27 8h3M27 29h3M27 50h3M28 15h2M28 22h2M28 36h2M28 43h2M28 57h2" stroke="#666" />
                <path d="M90 65C100 48 112 32 148 32H190L293 31" stroke="#7873b5" /><path d="M125 65C135 48 152 32 182 32L293 31" stroke="#d77b80" /><path d="M136.500 65C146 50 160 34 187 32L293 31" stroke="#7fb981" /><path d="M185 30.700H293" stroke="#8a3545" stroke-width="1.200" />
                <path d="M255 9h5.500v4h-5.500z" fill="#22c" /><path d="M255 16h5.500v4h-5.500z" fill="#c22" /><path d="M255 23h5.500v4h-5.500z" fill="#272" />
                <Tx :x="264" :y="13" :s="5" :l="27">f₀ = 6.7 mHz</Tx><Tx :x="264" :y="20" :s="5" :l="26">f₀ = 32 mHz</Tx><Tx :x="264" :y="27" :s="5" :l="26">f₀ = 59 mHz</Tx><Tx :x="16" :y="10" :s="5.500" :l="8">2.5</Tx><Tx :x="16" :y="31" :s="5.500" :l="8">0.0</Tx><Tx :x="14" :y="52" :s="5.500" :l="10">-2.5</Tx>
              </g>
              <g v-else-if="b.kind === 'stop'">
                <path d="M25.500 65V50.500H106L121 65zM202.500 65L217 50.500H298V65z" fill="#c4d0e2" /><path d="M25.500 50.500H106L121 65M202.500 65L217 50.500H298" stroke="#285fa8" stroke-width="2" /><path d="M25.500 44V65M16 22.600H36" stroke="#222" /><path d="M25.500 38.500l2.500 6h-5z" fill="#111" />
                <path d="M26 58H130M193 58H298M112 38V65M213 38V65" stroke="#aaa" stroke-dasharray="11 5" /><Tx :x="16.500" :y="20" :s="9.500" :l="7">V</Tx><Tx :x="23.500" :y="21.500" :s="6.500" :l="13">OUT</Tx><Tx :x="19" :y="31" :s="9.500" :l="7">V</Tx><Tx :x="26" :y="32.500" :s="6.500" :l="7">IN</Tx>
                <Tx :x="0.500" :y="60" :s="8.500" :l="20">-3dB</Tx><Tx :x="140.500" :y="47" :s="9" :l="41">Band Stop</Tx><Tx :x="141.500" :y="58" :s="9" :l="39">Response</Tx>
              </g>
              <g v-else-if="b.kind === 'construct'">
                <g fill="#f3f2f7" stroke="#888"><rect x="105" y="5" width="93" height="16" /><rect x="7" y="35.500" width="42" height="18" /></g><path d="M58.600 65V26.500H166M227 31.500H256M256 28V65" stroke="#555" /><path d="M57 33h4M57 40h4M57 47h4M57 54h4" stroke="#555" stroke-width=".8" />
                <path d="M116 65V40M109 65V55M123 65V55" stroke="#33c" stroke-width="1.300" /><path d="M181 30l4 3 5-4 5 4 5-4 5 4 5-4 5 4 5-4 5 2q3 10 5 34" stroke="#5c52b0" stroke-width="1.300" />
                <circle v-for="[x, y] in [[116, 40], [109, 55], [123, 55], [67, 63], [88, 62.500], [144, 62.500], [165, 63]]" :key="x" :cx="x" :cy="y" r="2" fill="#22b" />
                <Tx :x="107" :y="12" :s="6" :l="90" c="#555">How to construct a High-pass Filter</Tx><Tx :x="123" :y="18.500" :s="6" :l="57" c="#555">from a Low-pass Filter</Tx><Tx :x="15" :y="41" :s="4.500" :l="26" c="#555">Start with a</Tx><Tx :x="10" :y="46.300" :s="4.500" :l="37" c="#555">low-pass filter's</Tx><Tx :x="10" :y="51.600" :s="4.500" :l="37" c="#555">impulse response</Tx><Tx :x="261" :y="33" :s="6" :l="8" c="#555">1.0</Tx><Tx :x="52" :y="28" :s="5" c="#555">1</Tx>
              </g>
              <g v-else>
                <Tx :x="31" :y="27" :s="10.500" :l="120" b c="#7b1728">High Pass Filter Bode Plot</Tx><Tx :x="182" :y="27" :s="10.500" :l="74" b c="#7b1728">Phasor Diagram</Tx>
                <path d="M16.700 38V65M161.600 38V65" stroke="#666" /><path d="M17 42H161M17 56H161M70 38V65M88.600 38V65M106.500 38V65M125 38V65M143 38V65" stroke="#999" stroke-dasharray="4 2.500" /><path d="M40 40V65" stroke="#b33" stroke-dasharray="4 2" />
                <path d="M17 42.500Q62 41 88.600 56 100 64 125 65" stroke="#444" stroke-width="1.300" /><path d="M197.500 42V65" stroke="#1b3" stroke-width="1.500" /><path d="M198 43L206 65" stroke="#b22" stroke-width="1.800" /><path d="M198 42H208" stroke="#22c" stroke-width="1.500" /><path d="M206 38.500l6 3.500-6 3z" fill="#22c" /><path d="M209 38.500l7 3.500-7 3z" fill="#2c3" />
                <Tx :x="4.500" :y="45" :s="7" :l="11" b c="#8d2637">90°</Tx><Tx :x="6" :y="57" :s="7" :l="10" b c="#8d2637">45°</Tx><Tx :x="137" :y="55.500" :s="8.500" :l="23" b c="#8d2637">Phase</Tx><Tx :x="248" :y="46" :s="8" :l="8" b>0°</Tx><Tx :x="215" :y="33" :s="5" c="#2b3">Vₓ</Tx><Tx :x="210" :y="39" :s="5" c="#2b3">(Vsum)</Tx><Tx :x="203" :y="37" :s="6" c="#22c" b>I</Tx>
              </g>
            </svg>
          </section>
          <div class="status"><span v-fit="355">https://www.electronics-tutorials.ws/filter/filter_3.html</span></div>
        </div>
        <div class="scroll"><svg width="19" height="24"><path d="M5.500 14.500L9.500 9l4 5.500" /></svg><i></i><svg width="19" height="24"><path d="M5.500 9.500l4 5.500 4-5.500" /></svg></div>
      </div>
    </main>

    <!-- strip of the desktop that shows between the browser and the taskbar -->
    <div class="strip"></div>

    <footer class="taskbar">
      <svg class="ghost" width="1009" height="50" fill="none">
        <g stroke="#0c0c0c" stroke-width="1.300" stroke-dasharray="5 5"><path v-for="x in gridLines" :key="x" :d="`M${x} 0V50`" /><path d="M262 19.500H746" /></g><path d="M384 50L460 0" stroke="#08084a" stroke-width="1.500" />
        <Tx :x="239" :y="24" :s="14" :l="18" c="#0c0c0c">-20</Tx><Tx :x="239" :y="53" :s="14" :l="18" c="#0c0c0c">-40</Tx><text transform="translate(222 54) rotate(-90)" font-size="14" fill="#0c0c0c" font-family="Liberation Sans">de (dB)</text>
        <path d="M993 41l5 5 5-5" stroke="#555" stroke-width="2" />
      </svg>
      <div class="apps">
        <span class="start"><svg width="20" height="20"><path d="M0 3l8.500-1.200V9.500H0zM9.500 1.600L20 0v9.500H9.500zM0 10.500h8.500v7.700L0 17zM9.500 10.500H20V20L9.500 18.400z" fill="#fff" /></svg></span>
        <span class="find"><svg width="22" height="22" fill="none" stroke="#fff" stroke-width="1.600"><circle cx="14" cy="8" r="6.500" /><path d="M9.500 13L1.500 21" /></svg></span>
        <span class="tasks"><svg width="26" height="20" fill="none" stroke="#fff" stroke-width="1.500"><rect x="5.500" y="1.500" width="15" height="17" /><path d="M3.500 4H1v12h2.500M22.500 4H25v12h-2.500" /></svg></span>
        <span class="on full"><svg width="28" height="29"><circle cx="14.500" cy="12.500" r="9.500" fill="url(#globe)" /><path d="M3 4C4 6 5 7 7 7.500 9 6.500 11 7 12 7.500 9.500 9 9.500 11 11 11.500L14.500 12C14.500 14 12.500 14.500 11 15.500 12 18.500 17 19.500 20 16 22 13 21 9 18.500 6.500 20 4.500 19.500 2 19 .5 25 5 28 11 27 17.500 25.500 24.500 20 28.500 14 28.500 6 28.500 1 22.500 1 16 1 11 1.500 7 3 4z" fill="url(#fox)" /></svg></span>
        <span><svg width="28" height="25"><path d="M0 3q0-2 2-2h8l2 3h16v18H0z" fill="#ffe694" /><path d="M0 3q0-2 2-2h8l2 3-2 2H0z" fill="#f5b82e" /><path d="M2.500 2.500h5v1.500h-5z" fill="#fff" /><path d="M5.500 24V15q0-2 2-2h13q2 0 2 2v9h-4.500v-6h-8v6z" fill="#35aee2" /></svg></span>
        <span class="on"><svg width="28" height="24"><path d="M1 1h21l4 3H5z" fill="#5d2140" /><path d="M5 4h21v5H5z" fill="#c257a8" /><path d="M5 10.500h21V15H5z" fill="#2430c4" /><path d="M5 17h21v5H5z" fill="#1c9a25" /><path d="M1 1l4 3v5L1 7zM1 8l4 2.500V15l-4-2zM1 14l4 3v5l-4-3z" fill="#e8e8e8" /><path d="M15 2v20" stroke="#8a5a2b" stroke-width="3" /><rect x="13" y="9.500" width="4.500" height="4.500" fill="#ddd" stroke="#543" /></svg></span>
        <span class="on"><svg width="30" height="30"><circle cx="19" cy="7.500" r="2.800" fill="#fff" /><circle cx="25.500" cy="8" r="2.300" fill="#fff" /><path d="M15 12h5v6h-5zM22 12h5v6h-5z" fill="#fff" /><path d="M0 4l16-3v27L0 24.500z" fill="#5156b8" /><Tx :x="4.500" :y="18.500" :s="14" b c="#fff" f="Open Sans">T</Tx><circle cx="23" cy="23" r="6.300" fill="#7fba00" stroke="#fff" /><path d="M20 23l2.300 2.500 4-5" stroke="#fff" stroke-width="1.800" fill="none" /></svg></span>
        <span class="on"><svg width="22" height="28"><path d="M.5.500h15l6 6v21H.5z" fill="#f8f8f8" stroke="#bbb" /><path d="M15.500.500v6h6z" fill="#ccc" /></svg></span>
        <span class="on"><svg width="28" height="27"><path d="M14 4h13v19H14z" fill="#fff" stroke="#2b579a" /><path d="M17 7h8.500M17 10h8.500M17 13h8.500M17 16h8.500M17 19h8.500" stroke="#2b579a" stroke-width="1.200" /><path d="M0 3l17-3v27L0 24z" fill="#2b579a" /><Tx :x="2" :y="18.500" :s="13" :l="12" b c="#fff" f="Open Sans">W</Tx></svg></span>
      </div>
      <div class="tray">
        <b class="temp"><span v-fit="12">39</span></b>
        <svg width="21" height="22"><path d="M0 3l11-2v19L0 18z" fill="#4b4fb0" /><circle cx="13.500" cy="4.500" r="1.700" fill="#fff" /><circle cx="18" cy="5" r="1.500" fill="#fff" /><path d="M12 8h3v5h-3zM16 8h3v5h-3z" fill="#ccd" /><Tx :x="2.500" :y="14" :s="10.500" b c="#fff" f="Open Sans">T</Tx><circle cx="15" cy="16" r="5" fill="#7fba00" /><path d="M12.500 16l2 2 3-4" stroke="#fff" fill="none" stroke-width="1.400" /></svg>
        <svg width="21" height="22"><path d="M5 4h14l1 7H0z" fill="#b5b5b5" /><path d="M0 11h20v5H0z" fill="#858585" /><path d="M10 13.500l4 5 5-9.500" stroke="#3ccc55" stroke-width="3.500" fill="none" /></svg>
        <svg width="21" height="22"><path d="M9 1q4 2 9 2v6q0 8-9 11Q0 17 0 9V3q5 0 9-2z" fill="#fff" /><path d="M9 1v19M0 10h18" stroke="#111" stroke-width="1.500" /><path d="M14 10l6 11H8z" fill="#ffb300" /><path d="M14 14v3.500M14 18.500v1.500" stroke="#222" stroke-width="1.500" /></svg>
        <svg width="21" height="22"><rect width="20" height="21" rx="4" fill="#2a94dc" /><path d="M6 4h10v9H6zM8.500 7h5v3.500h-5zM3 7v11h9" fill="none" stroke="#9bd8fa" stroke-width="1.200" /><ellipse cx="14.500" cy="16" rx="4.500" ry="3.300" fill="#4ab3ef" stroke="#d5efff" /></svg>
        <svg width="21" height="22"><rect x="1" y="6" width="16" height="10" fill="none" stroke="#fff" stroke-width="1.300" /><path d="M3 8h3.500v6H3zM17.500 9H19v4h-1.500z" fill="#fff" /></svg>
        <svg width="21" height="22"><circle cx="10" cy="11" r="9.500" fill="#2380cf" stroke="#a8d2f2" /><path d="M4.500 14.500l5-4.500q0-4 4.500-4l-2 3 2 1.500 2.500-1q0 4-5.500 4l-4 3.500z" fill="#fff" /></svg>
        <svg width="21" height="22" fill="none" stroke="#fff" stroke-width="1.300"><path d="M1 8h2.500L7 4.500v13L3.500 14H1zM11.500 7l7 8M18.500 7l-7 8" /></svg>
        <svg width="21" height="22" fill="none" stroke="#777" stroke-width="1.200"><path d="M3 19Q3 5 18 4.500M7 19Q7 9 18 8.500M11 19q0-6 7-6.500" /><circle cx="16.500" cy="17.500" r="1.700" fill="#fff" stroke="none" /></svg>
        <span class="lang"><span v-fit="28">ENG</span></span>
        <div class="clock"><span v-fit="52">2:06 PM</span><span v-fit="67">1/27/2019</span></div>
        <svg class="note" width="34" height="32"><path d="M1 1h20v17H10l-5 4v-4H1z" fill="#fff" /><path d="M5 6h12M5 10h12M5 14h8" stroke="#222" stroke-width="1.500" /><circle cx="20.500" cy="20.500" r="10" fill="#26282c" stroke="#777" stroke-width="1.300" /><Tx :x="16.500" :y="26" :s="15" b c="#fff" f="Open Sans">2</Tx></svg>
      </div>
    </footer>
  </div>
</template>

<style>
body { margin: 0; overflow: hidden; background: #111; }
</style>

<style scoped>
* { box-sizing: border-box; }
.desktop { position: relative; width: 1920px; height: 1080px; overflow: hidden; font-family: 'Liberation Sans', Arial, sans-serif; }
svg { display: block; flex: none; }
h1, h2, h3, p, figure { margin: 0; font-weight: 400; }
span { white-space: nowrap; }
button { padding: 0; border: 0; font: inherit; }
.defs { position: absolute; }

.behind { display: flex; flex-direction: column; height: 1030px; }
.behind-title { display: flex; height: 29px; background: linear-gradient(#f8f8f8, #e2e2e2 10px, #f4f4f4 11px); font: 16px/30px 'Open Sans', sans-serif; color: #777; }
.behind-title span { margin-left: 36px; align-self: flex-start; }
.behind-bar { height: 25px; background: linear-gradient(90deg, #c8c8c8 50%, #b9b9b9 50%); }
.behind-box { height: 37px; border: 1px solid #111; background: linear-gradient(90deg, #e6e6e6 50%, #c5c5c5 50%); }
.behind-body { flex: 1; background: linear-gradient(90deg, #585858 50%, #d2d2d2 50%); }

.window { position: absolute; left: 6px; top: 10px; width: 1908px; height: 1014px; display: flex; flex-direction: column; border: 1px solid #1a80d8; background: #fff; box-shadow: 0 0 9px rgba(0, 0, 0, .4); }
.tabs { display: flex; height: 41px; background: #20233e; font: 14.600px/22px 'Open Sans', 'Noto Sans', sans-serif; color: #f9f9fa; }
.lead { width: 49px; }
.tab { display: flex; align-items: center; width: 281.500px; padding: 1px 16px 0 12px; border-left: 1px solid #666980; }
.tab .label { flex: 1; height: 22px; margin: 0 6px 0 7px; overflow: hidden; }
.tab .label.fade { -webkit-mask-image: linear-gradient(90deg, #000 83%, transparent); mask-image: linear-gradient(90deg, #000 83%, transparent); }
.tab .x { stroke: #b3b4c0; stroke-width: 1.700; }
.tab.active { width: 280px; padding: 0 15px 2px 12px; border-left: 0; border-top: 3px solid #0a84ff; background: #f9f9fa; color: #0c0c0d; }
.tab.active .x { stroke: #444; }
.plus { margin: 12px 0 0 12px; stroke: #b9bac6; stroke-width: 2; }
.controls { display: flex; gap: 43px; margin: 13px 21px 0 auto; }
.controls svg { fill: none; stroke: #fff; stroke-width: 1.200; }

.toolbar { display: flex; align-items: center; height: 51px; padding-bottom: 1px; border-bottom: 1px solid #d5d5d8; background: #f9f9fa; }
.toolbar svg { fill: none; stroke: #4a4a4f; stroke-width: 2.400; stroke-linejoin: round; }
.toolbar .solid { fill: #4a4a4f; stroke: none; }
.back { display: grid; place-items: center; width: 42px; height: 42px; margin-left: 4px; border: 1px solid #b1b1b3; border-radius: 50%; background: #fff; }
.toolbar .fwd { margin-left: 10px; stroke: #b8b8bb; stroke-width: 2; }
.reload { margin-left: 19px; }
.home { margin-left: 18px; }
.url, .search { display: flex; align-items: center; height: 37px; border: 1px solid #c1c1c4; border-radius: 3px; background: #fff; font: 18.200px/26px 'Open Sans', 'Noto Sans', sans-serif; color: #77777a; }
.url { width: 1127px; margin-left: 79px; padding-left: 10px; }
.toolbar .url .lock { margin-left: 7px; stroke-width: 0; }
.address { width: 838px; margin-left: 9px; padding-top: 3px; overflow: hidden; -webkit-mask-image: linear-gradient(90deg, #000 95%, transparent 99.500%); mask-image: linear-gradient(90deg, #000 95%, transparent 99.500%); }
.address b { font-weight: 400; color: #0c0c0d; }
.hint { padding-top: 3px; }
.zoom { width: 49px; height: 20px; margin-left: 43px; border: 1px solid #d0d0d3; border-radius: 10px; background: #f0f0f1; font-size: 13.500px; line-height: 19px; text-align: center; color: #111; }
.sep { width: 1px; height: 26px; margin-left: 15px; background: #ddd; }
.toolbar .url .dots { margin-left: 14px; fill: #666; stroke: none; }
.toolbar .url .pocket { margin-left: 13px; stroke: #666; }
.toolbar .url .star { margin-left: 13px; stroke: #666; }
.search { width: 329px; margin-left: 12px; padding-left: 10px; }
.toolbar .search svg { margin-right: 7px; stroke: #999; }
.lib { margin-left: 80px; }
.side-ic { margin-left: 17px; }
.sep.tall { height: 42px; margin-left: 13px; }
.menu { margin-left: 15px; }

.viewport { display: flex; flex: 1; min-height: 0; }
.page { position: relative; flex: none; width: 1886px; overflow: hidden; }
.results { display: flex; gap: 27px; height: 208px; padding-left: 27px; }
.results h3 { margin: 8px 0 1px 5px; font-size: 14.600px; line-height: 20px; color: #6c6c6c; }
.results p { margin-left: 5px; font-size: 12.400px; line-height: 20px; color: #a0a0a0; }
.results.lower { gap: 27.400px; height: 78px; padding-top: 13px; }

.panel { position: relative; display: flex; width: 1885px; height: 634px; background: #222; }
.caret { position: absolute; left: 739px; top: -11px; border: solid transparent; border-width: 0 11px 11px; border-bottom-color: #222; }
.arrow { display: grid; place-items: center; align-self: center; flex: none; width: 36px; height: 89px; background: #3b3b3b; border: 1px solid #191919; border-width: 1px 0; }
.arrow.prev { padding-right: 2px; }
.arrow.next { width: 35px; padding-right: 2px; }
.arrow svg { fill: none; stroke: #999; stroke-width: 2.300; }
.panel figure { flex: none; width: 1186px; padding: 34px 0 0 326px; }
.hero { box-shadow: 0 2px 24px 6px rgba(0, 0, 0, .5); }
figcaption { display: flex; justify-content: center; width: 505px; margin-top: 21px; font-size: 14.600px; line-height: 20px; color: #777; }
figcaption span:nth-child(2) { margin: 0 6px 0 7px; }
figcaption b { margin-right: 4px; font-weight: 400; color: #bbb; }
.panel aside { flex: none; width: 629px; padding-top: 23px; }
.info { width: 599px; height: 223px; padding: 75px 0 0 22px; border-left: 1px solid #111; border-bottom: 1px solid #111; box-shadow: inset 1px 0 #2c2c2c, 0 1px #2c2c2c; }
.info h1 { font-size: 24.600px; line-height: 27px; color: #ddd; }
.info p { font-size: 14.600px; line-height: 18px; color: #777; }
.info .desc { margin-top: 7px; color: #8b8b8b; }
.actions { display: flex; gap: 11px; margin-top: 18px; }
.actions button { display: flex; justify-content: center; align-items: center; gap: 5px; height: 36px; border: 1px solid #161616; border-radius: 2px; background: #444; box-shadow: inset 0 1px #505050, 0 1px #303030; font-size: 12.400px; font-weight: 700; color: #aaa; }
.actions .visit { width: 65px; }
.actions .add { width: 76px; }
.actions .coll { width: 83px; }
.actions .share { width: 74px; }
.related { height: 318px; padding: 21px 0 0 22px; border-left: 1px solid #111; box-shadow: inset 1px 0 #2c2c2c; }
.related h2 { font-size: 15.600px; line-height: 20px; color: #999; }
.grid { display: grid; grid-template-columns: repeat(4, 90px); gap: 11.500px 13.100px; margin: 8px 0 0 3.500px; }
.thumb { position: relative; height: 90px; background: #fff; }
.thumb.selected { outline: 3px solid #bbb; outline-offset: 0; }
.more { position: absolute; inset: 0; padding-top: 26px; background: rgba(20, 20, 20, .62); font-size: 18px; line-height: 21px; text-align: center; color: #eee; text-shadow: 0 0 6px #000; }
.foot { display: flex; margin: 30px 0 0 22px; font-size: 12.400px; line-height: 20px; color: #808080; }
.foot span:nth-child(2) { margin: 0 6px; }
.close { position: absolute; left: 1837px; top: 24px; stroke: #5d5d5d; stroke-width: 1.800; }
.status { position: absolute; left: 0; bottom: 0; height: 26px; padding: 0 6px; border: solid #ccc; border-width: 1px 1px 0 0; background: #f9f9fa; font: 15px/26px 'Open Sans', 'Noto Sans', sans-serif; color: #444; }
.scroll { display: flex; flex-direction: column; width: 20px; background: #f0f0f0; }
.scroll svg { fill: none; stroke: #505050; stroke-width: 2; }
.scroll i { width: 18px; height: 129px; margin: 82px 0 auto; background: #cdcdcd; }

.strip { position: absolute; left: 0; top: 1024px; width: 1920px; height: 6px; background: linear-gradient(90deg, #666 41px, #4a4a4a 41px 346px, #333 346px 387px, #000 387px 388px, #444 388px 394px, #ccc 394px 488px, #000 488px 489px, #d3bfb0 489px 509px, #a8a8a8 509px 608px, #d5d5d5 608px 1092px, #999 1092px 1156px, #222 1156px 1158px, #d5bfb3 1158px 1235px, #000 1235px 1236px, #d5d5d5 1236px 1328px, #222 1328px 1334px, #bbb 1334px 1355px, #444 1355px 1899px, #ddd 1899px); }
.taskbar { position: relative; display: flex; justify-content: space-between; height: 50px; background: linear-gradient(90deg, #030509 346px, #101011 346px 388px, #0a0a0a 388px 394px, #222 394px 488px, #0c0c0c 488px 490px, #261f1c 490px 509px, #1e1e1e 509px 608px, #252525 608px 1092px, #1d1d1d 1092px 1156px, #050505 1156px 1158px, #2a221f 1158px 1235px, #050505 1235px 1236px, #252525 1236px 1328px, #080808 1328px 1334px, #1c1c1c 1334px 1355px, #030509 1355px 1914px, #666 1914px 1915px, #030509 1915px); }
.ghost { position: absolute; left: 346px; top: 0; }
.apps { position: relative; display: flex; }
.apps span { display: grid; place-items: center; position: relative; width: 62px; }
.apps .start, .apps .find { width: 60px; }
.apps .tasks { width: 64px; padding-right: 5px; }
.apps .on::after { content: ''; position: absolute; left: 6px; right: 5px; bottom: 0; height: 3px; background: #76b9ed; }
.apps .full { width: 61px; background: #34363e; }
.apps .full::after { left: 0; right: 0; }
.tray { display: flex; align-items: center; gap: 9.400px; font: 15px/22px 'Open Sans', 'Noto Sans', sans-serif; color: #fff; }
.temp { width: 14px; margin: -4px 4px 0 0; font-size: 11px; font-weight: 400; color: #f5d800; }
.lang { margin-left: -1px; font-size: 14.500px; }
.clock { display: flex; flex-direction: column; align-items: center; width: 67px; margin-left: 8px; line-height: 23px; }
.note { margin: 9px 19px 0 13px; }
</style>
